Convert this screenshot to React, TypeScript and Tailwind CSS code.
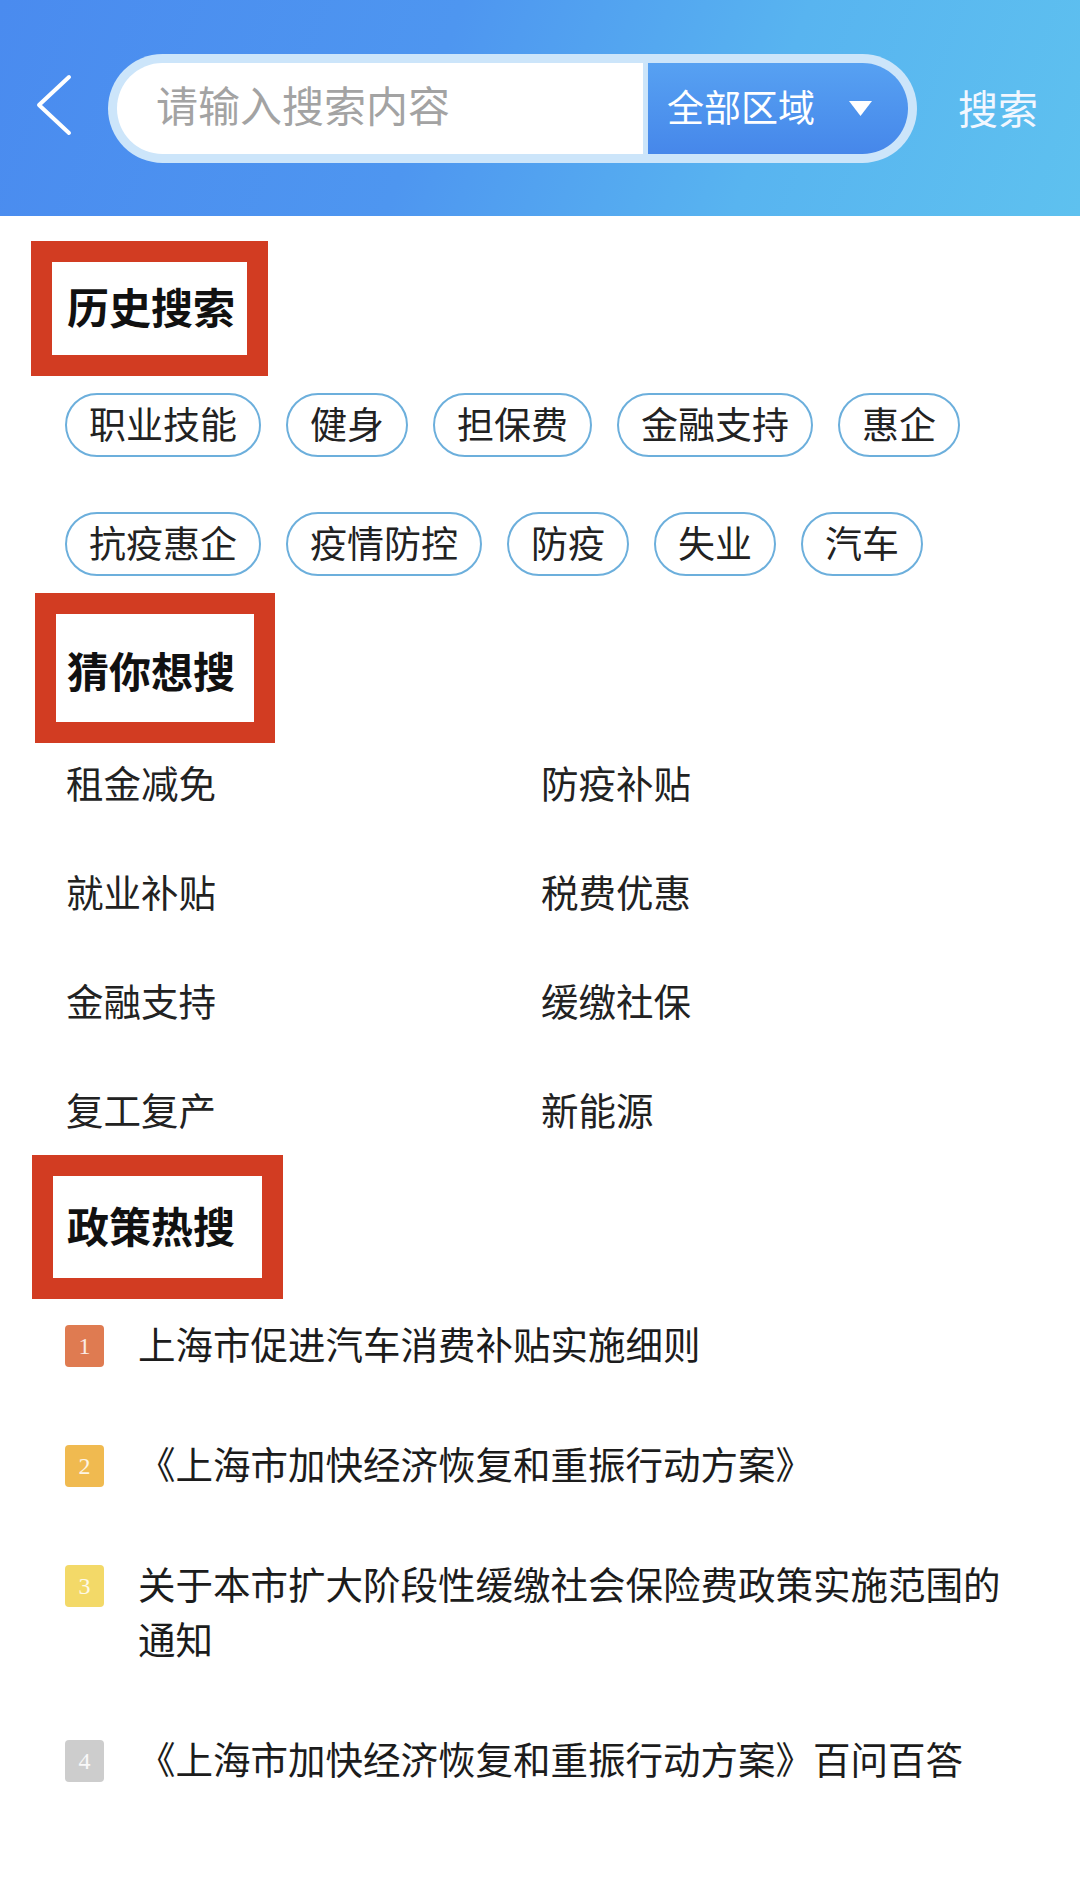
import React from "react";

const historyRows: string[][] = [
  ["职业技能", "健身", "担保费", "金融支持", "惠企"],
  ["抗疫惠企", "疫情防控", "防疫", "失业", "汽车"],
];

const guesses = [
  "租金减免",
  "防疫补贴",
  "就业补贴",
  "税费优惠",
  "金融支持",
  "缓缴社保",
  "复工复产",
  "新能源",
];

const hotList = [
  { rank: 1, color: "bg-[#df7b51]", title: "上海市促进汽车消费补贴实施细则" },
  { rank: 2, color: "bg-[#f0ba50]", title: "《上海市加快经济恢复和重振行动方案》" },
  { rank: 3, color: "bg-[#f3d968]", title: "关于本市扩大阶段性缓缴社会保险费政策实施范围的通知" },
  { rank: 4, color: "bg-[#cdcdcd]", title: "《上海市加快经济恢复和重振行动方案》百问百答" },
];

const SearchHeader = () => {
  return (
    <div className="h-[216px] flex items-center pl-[36px] bg-[linear-gradient(110deg,#4a8bef_0%,#4e96f0_40%,#58b4f0_70%,#5ec1ef_100%)]">
      <svg width="36" height="64" viewBox="0 0 36 64" fill="none" className="shrink-0 -mt-[6px]">
        <path d="M33 4 L3 32 L33 60" stroke="white" strokeWidth="4" strokeLinecap="round" strokeLinejoin="round" />
      </svg>

      <div className="ml-[36px] w-[809px] h-[109px] rounded-full bg-[#cce5fa] p-[9px] flex gap-[5px]">
        <div className="flex-1 h-full rounded-l-full bg-white flex items-center pl-[39px] pb-[8px]">
          <span className="text-[42px] leading-none text-[#a3a3a3]">请输入搜索内容</span>
        </div>
        <button className="w-[260px] h-full rounded-r-full bg-linear-to-b from-[#57a1f2] to-[#4687ea] flex items-center pl-[19px] text-white">
          <span className="text-[37px] leading-none -mt-[4px]">全部区域</span>
          <svg width="23" height="15" viewBox="0 0 23 15" className="ml-[34px]">
            <path d="M0 0 H23 L11.5 15 Z" fill="white" />
          </svg>
        </button>
      </div>

      <button className="ml-[41px] text-[40px] leading-none text-[#f2f7ff] -mt-[2px]">搜索</button>
    </div>
  );
};

const SectionTitle = ({ title, className }: { title: string; className: string }) => {
  return (
    <div className={`border-[21px] border-[#d23c22] bg-white flex items-center ${className}`}>
      <span className="text-[42px] leading-none font-bold text-[#111]">{title}</span>
    </div>
  );
};

export default function App() {
  return (
    <div className="w-[1080px] min-h-[1879px] bg-white text-[#1c1c1c] font-['Noto_Sans_CJK_SC','Noto_Sans',sans-serif]">
      <SearchHeader />

      <SectionTitle title="历史搜索" className="ml-[31px] mt-[25px] w-[237px] h-[135px] pl-[15px] pb-[5px]" />

      <div className="mt-[17px] pl-[65px] flex flex-col gap-[55px]">
        {historyRows.map((row, i) => (
          <div key={i} className="flex gap-[25px]">
            {row.map((tag) => (
              <span
                key={tag}
                className="h-[64px] px-[22px] pb-[4px] rounded-full border-2 border-[#6cafdc] flex items-center text-[37px] leading-none text-[#222]"
              >
                {tag}
              </span>
            ))}
          </div>
        ))}
      </div>

      <SectionTitle title="猜你想搜" className="ml-[35px] mt-[17px] w-[240px] h-[150px] pl-[11px] pt-[4px]" />

      <div className="mt-[11px] pl-[66px] grid grid-cols-[475px_1fr] gap-y-[54px]">
        {guesses.map((g) => (
          <span key={g} className="text-[37.5px] leading-[55px] text-[#222]">
            {g}
          </span>
        ))}
      </div>

      <SectionTitle title="政策热搜" className="ml-[32px] mt-[19px] w-[251px] h-[144px] pl-[14px] pb-[4px]" />

      <div className="mt-[16px] pl-[65px] pr-[50px] flex flex-col gap-[65px]">
        {hotList.map((item) => (
          <div key={item.rank} className="flex items-start">
            <span
              className={`shrink-0 w-[39px] h-[42px] mt-[10px] rounded-[4px] ${item.color} flex items-center justify-center text-[24px] leading-none text-white/85 font-['Liberation_Serif',serif]`}
            >
              {item.rank}
            </span>
            <p className="ml-[34px] flex-1 text-[37.5px] leading-[55px] text-[#1c1c1c]">{item.title}</p>
          </div>
        ))}
      </div>
    </div>
  );
}
